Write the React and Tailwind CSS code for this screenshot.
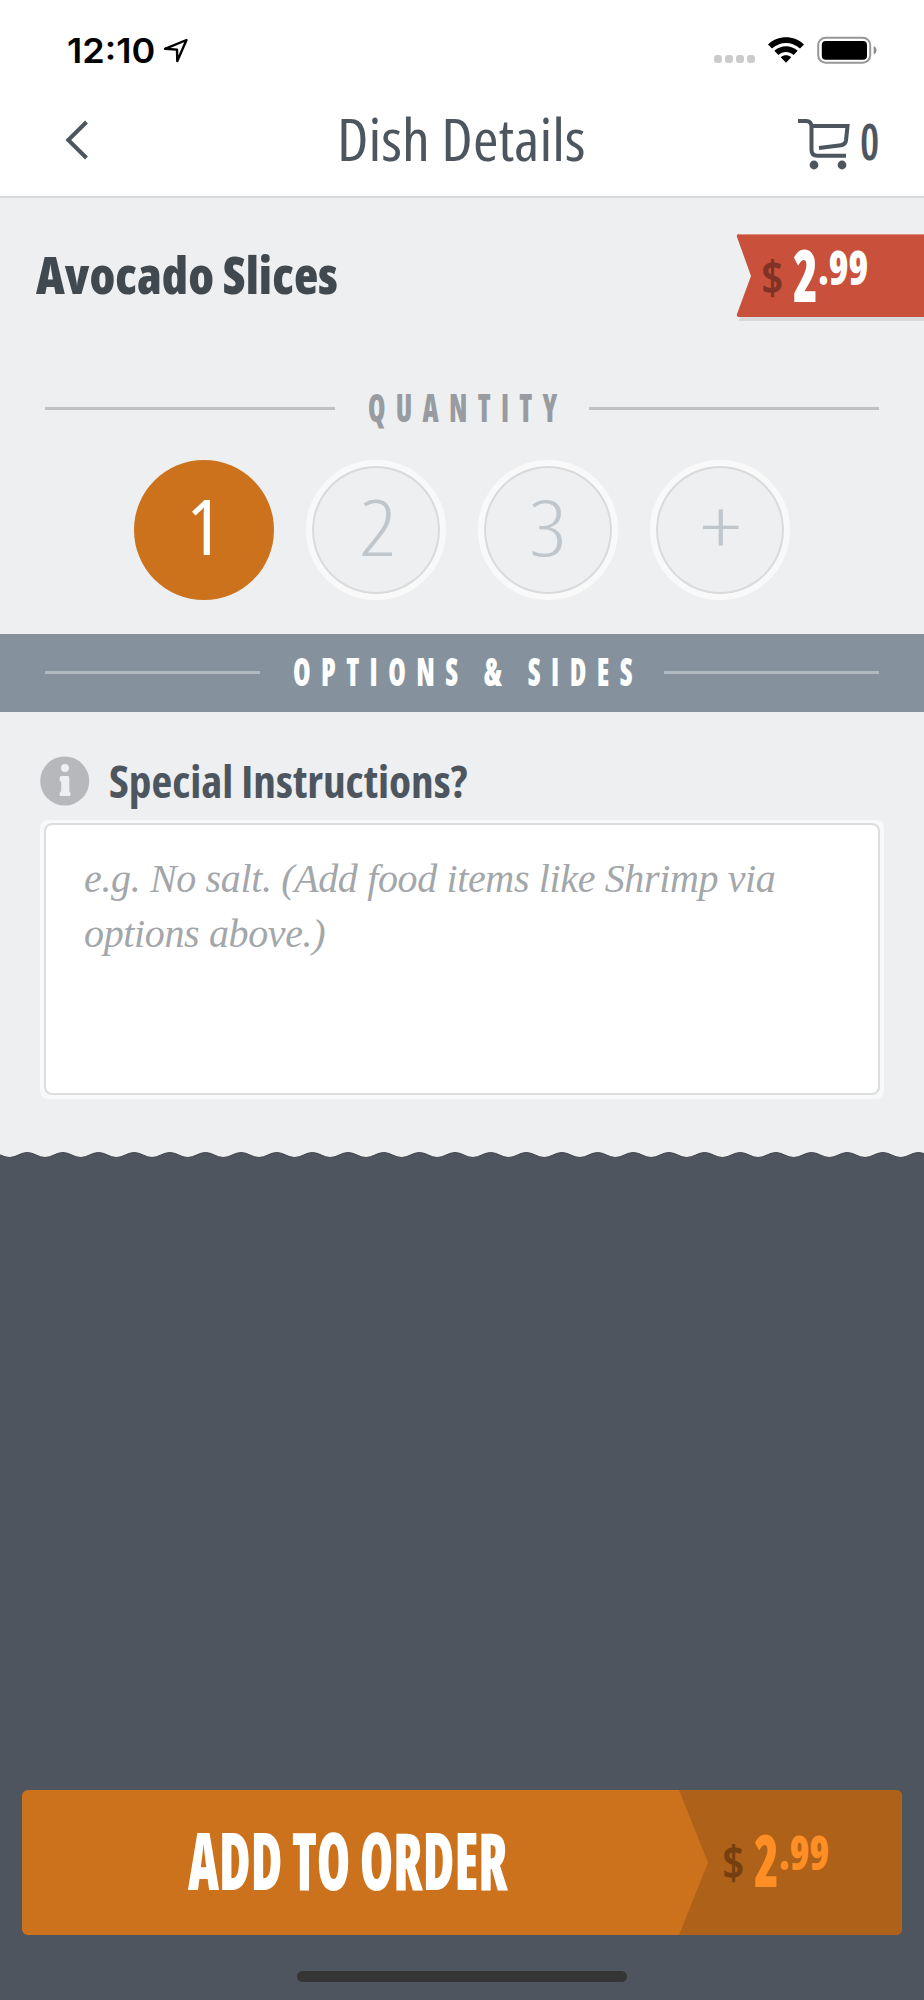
import { useLayoutEffect, useRef, useState } from "react";

// Squeezes a line of text horizontally until it fills the width of its box
const FitText = ({ className = "", children }) => {
    const boxRef = useRef(null);
    const textRef = useRef(null);
    const [scale, setScale] = useState(1);

    useLayoutEffect(() => {
        setScale(boxRef.current.clientWidth / textRef.current.offsetWidth);
    }, [children]);

    return (
        <span
            ref={boxRef}
            className={`block shrink-0 whitespace-nowrap leading-none ${className}`}
        >
            <span
                ref={textRef}
                className="inline-block origin-left align-top"
                style={{ transform: `scaleX(${scale})` }}
            >
                {children}
            </span>
        </span>
    );
};

const StatusBar = () => (
    <div className="flex h-[100px] items-start pl-[67px] pr-[47px]">
        <FitText className="mt-[34px] w-[88px] font-[Inter,sans-serif] text-[34px] font-semibold text-black">
            12:10
        </FitText>
        <svg className="ml-[8px] mt-[38px]" width="26" height="25" viewBox="0 0 26 25" fill="none">
            <path
                d="M23.5 2 L2 10.8 L14 11.6 L14.3 23 Z"
                stroke="#000"
                strokeWidth="2.4"
                strokeLinejoin="round"
            />
        </svg>
        <div className="ml-auto mt-[55px] flex gap-[3px]">
            {[0, 1, 2, 3].map((dot) => (
                <span key={dot} className="size-[8px] rounded-[3px] bg-[#cbcbcb]" />
            ))}
        </div>
        <svg className="ml-[12px] mt-[36px]" width="38" height="28" viewBox="0 0 38 28">
            <path
                d="M1 8.5 C11 -1.2 27 -1.2 37 8.5 L33 12.5 C25.3 5 12.7 5 5 12.5 Z"
                fill="#000"
            />
            <path
                d="M7.3 14.8 C14 8.6 24 8.6 30.7 14.8 L26.6 18.9 C22.3 15 15.7 15 11.4 18.9 Z"
                fill="#000"
            />
            <path d="M13.8 21.2 C16.8 18.7 21.2 18.7 24.2 21.2 L19 26.8 Z" fill="#000" />
        </svg>
        <svg className="ml-[12px] mt-[36px]" width="60" height="28" viewBox="0 0 60 28">
            <rect x="1.2" y="1.7" width="52" height="25" rx="7.5" fill="none" stroke="#969696" strokeWidth="2" />
            <rect x="4.8" y="5" width="45.2" height="18.8" rx="4" fill="#000" />
            <path d="M56.7 10 C60.4 11.5 60.4 17 56.7 18.6 Z" fill="#8e8e8e" />
        </svg>
    </div>
);

const CartIcon = () => (
    <svg width="54" height="54" viewBox="0 0 54 54" fill="none" stroke="#4d565f" strokeWidth="4">
        <path d="M1 4 H9 Q14.5 4 14.5 10 V33 Q14.5 38.8 20.5 38.8 H49" />
        <path d="M14.5 9 H50.5 L49 23.5 Q48.4 27.8 44 28.3 L22 31" />
        <circle cx="17" cy="48" r="4.4" fill="#4d565f" stroke="none" />
        <circle cx="45" cy="48" r="4.4" fill="#4d565f" stroke="none" />
    </svg>
);

const NavBar = () => (
    <div className="flex h-[96px] items-start text-[#4d565f]">
        <button className="ml-[65px] mt-[20px]">
            <svg width="24" height="40" viewBox="0 0 24 40" fill="none">
                <path d="M21.5 2 L3.3 20 L21.5 38" stroke="#4d565f" strokeWidth="4" />
            </svg>
        </button>
        <h1 className="ml-[248px] mt-[9px]">
            <FitText className="w-[249px] text-[59px] font-normal font-stretch-condensed">
                Dish Details
            </FitText>
        </h1>
        <button className="ml-auto mr-[45px] flex items-start">
            <span className="mt-[17px]">
                <CartIcon />
            </span>
            <FitText className="ml-[9px] mt-[16px] w-[19px] text-[50px] font-semibold font-stretch-condensed">
                0
            </FitText>
        </button>
    </div>
);

const Price = ({ currencyColor }) => (
    <div className="flex items-start">
        <FitText className={`mt-[4px] w-[23px] text-[46px] font-bold font-stretch-condensed ${currencyColor}`}>
            $
        </FitText>
        <FitText className="ml-[9px] mt-[-12px] w-[25px] text-[73px] font-extrabold font-stretch-condensed">
            2
        </FitText>
        <FitText className="mt-[-5px] w-[50px] text-[47px] font-extrabold font-stretch-condensed">
            .99
        </FitText>
    </div>
);

const PriceTag = () => (
    <div className="relative h-[90px] w-[188px] text-white">
        <svg className="absolute left-0 top-0" width="188" height="90" viewBox="0 0 188 90">
            <path d="M4 82 H188 V87 H3 Z" fill="#d8dada" />
            <path d="M3 -1 H188 V1 H3 Z" fill="#f9f9f9" />
            <path d="M3 0 H188 V83 H3 Q0 83 1 80 L15 42 L1 3 Q0 0 3 0 Z" fill="#c9513b" />
            <path d="M3 0.5 H188" stroke="#dc8d7d" strokeWidth="1" />
        </svg>
        <div className="relative pl-[25px] pt-[15px]">
            <Price currencyColor="text-[#7f3325]" />
        </div>
    </div>
);

const Divider = ({ lineColor, children }) => (
    <div className="flex h-[41px] items-center px-[45px]">
        <span className={`h-[3px] flex-1 ${lineColor}`} />
        {children}
        <span className={`h-[3px] flex-1 ${lineColor}`} />
    </div>
);

const Quantity = () => {
    const [quantity, setQuantity] = useState("1");
    const options = [
        { label: "1", width: "mr-[1px] w-[34px]" },
        { label: "2", width: "mr-[2px] w-[37px]" },
        { label: "3", width: "mr-[6px] w-[37px]" },
        { label: "+", width: "mr-[8px] mt-[-1px] w-[42px]" },
    ];

    return (
        <div className="flex justify-center gap-[32px]">
            {options.map(({ label, width }) => (
                <button
                    key={label}
                    onClick={() => setQuantity(label)}
                    className={`flex size-[140px] justify-center rounded-full ${
                        quantity === label
                            ? "bg-[#cd721c] pt-[27px] text-white"
                            : "border-[6px] border-[#f9f9f9] pt-[22px] text-[#bfc6cc] inset-ring-2 inset-ring-[#d8dadb]"
                    }`}
                >
                    <FitText
                        className={`${width} text-[77px] font-stretch-condensed ${
                            quantity === label ? "font-medium" : "font-light"
                        }`}
                    >
                        {label}
                    </FitText>
                </button>
            ))}
        </div>
    );
};

const InfoIcon = () => (
    <svg width="50" height="50" viewBox="0 0 50 50">
        <circle cx="24.7" cy="25" r="24.5" fill="#b6b8bb" />
        <circle cx="25" cy="12" r="4" fill="#edeff1" />
        <path
            d="M21 20 H28 Q29.3 20 29.3 21.5 V35 Q30.5 36 30.5 38.5 Q30.5 40 29 40 H21 Q19.5 40 19.5 38.5 Q19.5 36 21.2 35 V26 Q19.5 25.5 19.5 22.5 Q19.5 20 21 20 Z"
            fill="#edeff1"
        />
    </svg>
);

const SpecialInstructions = () => (
    <div className="px-[40px] pt-[44px]">
        <div className="flex h-[64px] items-start">
            <InfoIcon />
            <label htmlFor="instructions">
                <FitText className="ml-[19px] mt-[2px] w-[358px] text-[45px] font-bold font-stretch-condensed text-[#4d565f]">
                    Special Instructions?
                </FitText>
            </label>
        </div>
        <div className="h-[279px] rounded-[8px] bg-[#f8f9f9] p-[4px] pt-[3px]">
            <textarea
                id="instructions"
                placeholder="e.g. No salt. (Add food items like Shrimp via options above.)"
                className="block h-[272px] w-full resize-none rounded-[8px] border-[2.5px] border-[#dcdddd] bg-white pl-[38px] pr-[60px] pt-[27px] font-['Liberation_Serif',serif] text-[40px] italic leading-[54.5px] tracking-[-0.36px] placeholder:text-[#a3a7aa]"
            />
        </div>
    </div>
);

const WavyEdge = () => {
    // crest every 35.65px, the first one at x = 27.2
    let wave = "M-8.4 1.5";
    for (let i = 0; i < 27; i++) {
        wave += " c6.5 0 11.3 5 17.8 5 s11.3 -5 17.85 -5";
    }

    return (
        <svg className="block" width="924" height="10" viewBox="0 0 924 10">
            <path d={`${wave} V12 H-9 Z`} fill="#4e555e" stroke="#3d444a" strokeWidth="1" />
            <path d="M0 8 H924 V10 H0 Z" fill="#4e555e" />
        </svg>
    );
};

const AddToOrder = () => (
    <button className="relative ml-[22px] flex h-[145px] w-[880px] items-start overflow-hidden rounded-[6px] bg-[#cd721c] text-left">
        <svg className="absolute right-0 top-0" width="223" height="145" viewBox="0 0 223 145">
            <path d="M0 0 H223 V145 H0 L29 72.5 Z" fill="#ae6118" />
        </svg>
        <FitText className="ml-[166px] mt-[29px] w-[320px] text-[80px] font-extrabold font-stretch-condensed text-white">
            ADD TO ORDER
        </FitText>
        <div className="relative ml-[214px] mt-[44px] text-[#ff8e24]">
            <Price currencyColor="text-[#753f10]" />
        </div>
    </button>
);

const App = () => {
    return (
        <div className="flex h-[2000px] w-[924px] flex-col bg-[#4e555e] font-['Open_Sans',sans-serif]">
            <header className="h-[198px] border-b-2 border-[#d8d9da] bg-white">
                <StatusBar />
                <NavBar />
            </header>

            <main className="h-[953px] bg-[#edeff1]">
                <div className="flex h-[190px] items-start justify-between pl-[36px] pt-[36px]">
                    <h2 className="mt-[15px]">
                        <FitText className="w-[302px] text-[51px] font-extrabold font-stretch-condensed text-[#404950]">
                            Avocado Slices
                        </FitText>
                    </h2>
                    <PriceTag />
                </div>

                <Divider lineColor="bg-[#bfc1c1]">
                    <FitText className="mb-[3px] ml-[33px] mr-[21px] w-[200px] text-[38px] font-extrabold tracking-[14px] font-stretch-condensed text-[#989b9f]">
                        QUANTITY
                    </FitText>
                </Divider>

                <div className="mt-[31px]">
                    <Quantity />
                </div>

                <div className="mt-[34px] h-[78px] bg-[#85929d] pt-[18px] text-white">
                    <Divider lineColor="bg-[#b1bac1]">
                        <FitText className="mb-[3px] ml-[33px] mr-[21px] w-[350px] text-[38px] font-extrabold tracking-[14px] font-stretch-condensed">
                            OPTIONS &amp; SIDES
                        </FitText>
                    </Divider>
                </div>

                <SpecialInstructions />
            </main>

            <div className="bg-[#edeff1]">
                <WavyEdge />
            </div>

            <footer className="mt-auto h-[210px]">
                <AddToOrder />
                <div className="mx-auto mt-[36px] h-[11px] w-[330px] rounded-full bg-[#353535]" />
            </footer>
        </div>
    );
};

export default App;
